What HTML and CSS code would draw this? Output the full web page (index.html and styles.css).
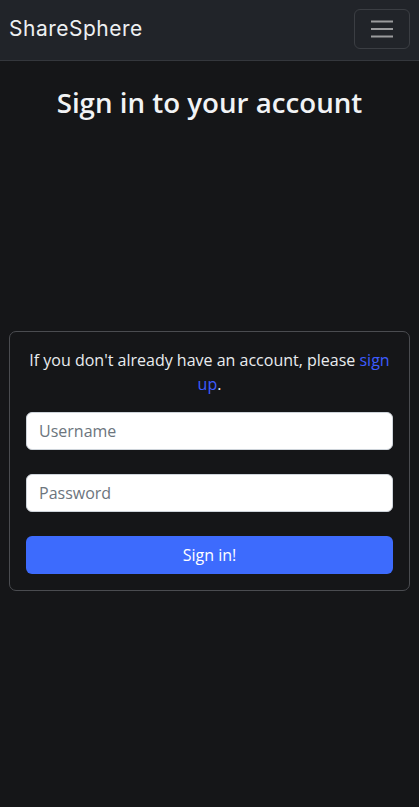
FILE: index.html
```html
<!DOCTYPE html>
<html lang="en">
<head>
<meta charset="utf-8">
<title>ShareSphere</title>
<link rel="stylesheet" href="styles.css">
</head>
<body>
<nav class="navbar">
  <a class="brand" href="#">ShareSphere</a>
  <button class="toggler" type="button" aria-label="Toggle navigation">
    <svg width="30" height="30" viewBox="0 0 30 30"><path d="M4 7.5h22M4 15h22M4 22.5h22" stroke="#9b9c9e" stroke-width="2" fill="none"/></svg>
  </button>
</nav>
<main class="main">
  <h1 class="title">Sign in to your account</h1>
  <div class="spacer"></div>
  <div class="card">
    <p class="note">If you don't already have an account, please <a href="#" class="link">sign up</a>.</p>
    <form class="form">
      <input class="field" type="text" placeholder="Username">
      <input class="field" type="password" placeholder="Password">
      <button class="submit" type="button">Sign in!</button>
    </form>
  </div>
</main>
</body>
</html>
```
FILE: styles.css
```css
* { box-sizing: border-box; }
html, body { margin: 0; padding: 0; }
body {
  background: #151618;
  color: #dee2e6;
  font-family: "Open Sans", "Liberation Sans", sans-serif;
  font-size: 16px;
  line-height: 1.5;
  min-height: 807px;
}
.navbar {
  height: 61px;
  background: #212429;
  border-bottom: 1px solid #34373c;
  display: flex;
  align-items: center;
  justify-content: space-between;
  padding: 0 9px 0 9px;
}
.brand {
  font-family: "Inter", "Liberation Sans", sans-serif;
  font-size: 21px;
  color: #eef0f2;
  text-decoration: none;
  letter-spacing: 0.5px;
  margin-top: -2px;
}
.toggler {
  width: 56px;
  height: 40px;
  background: transparent;
  border: 1px solid #3b3e43;
  border-radius: 6px;
  display: flex;
  align-items: center;
  justify-content: center;
  padding: 0;
  margin-top: -2px;
}
.toggler svg { display: block; }
.main {
  padding: 0 9px;
}
.title {
  margin: 0;
  padding-top: 25px;
  text-align: center;
  font-size: 27.7px;
  font-weight: 600;
  line-height: 1.2;
  height: 59px;
  color: #f1f3f5;
}
.spacer { height: 211px; }
.card {
  border: 1px solid #4a4c50;
  border-radius: 7px;
  padding: 16px;
}
.note {
  margin: 0 0 16px;
  text-align: center;
  color: #e9ecef;
}
.link { color: #3d5cff; text-decoration: none; }
.form {
  display: flex;
  flex-direction: column;
  gap: 24px;
}
.field {
  height: 38px;
  width: 100%;
  border: 1px solid #ced4da;
  border-radius: 6px;
  background: #fff;
  padding: 6px 12px;
  font-family: "Open Sans", "Liberation Sans", sans-serif;
  font-size: 16px;
  color: #212529;
}
.field::placeholder { color: #6c757d; }
.submit {
  height: 38px;
  width: 100%;
  border: none;
  border-radius: 6px;
  background: #3d6bfd;
  color: #fff;
  font-family: "Open Sans", "Liberation Sans", sans-serif;
  font-size: 16px;
}
```
